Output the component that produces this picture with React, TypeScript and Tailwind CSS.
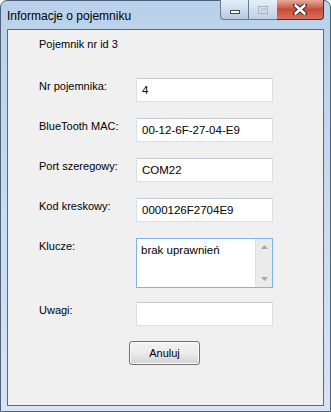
import type { ReactNode } from 'react';

const FONT = { fontFamily: '"Liberation Sans", Arial, sans-serif' };

function Row({ label, children }: { label: string; children: ReactNode }) {
  return (
    <div className="flex">
      <div className="w-[97px] pt-[2px] text-[11px] leading-[13px] text-black">{label}</div>
      {children}
    </div>
  );
}

function TextBox({ value }: { value: string }) {
  return (
    <div className="w-[137px] h-[24px] bg-white border border-[#d9dfe6] border-t-[#c5cbd3] pl-[5px] pt-[4px] text-[11.5px] leading-[14px] text-black">
      {value}
    </div>
  );
}

function MultiBox({ value }: { value: string }) {
  return (
    <div className="w-[137px] h-[50px] bg-white border border-[#7eb4ea] flex">
      <div className="flex-1 pl-[4px] pt-[4px] text-[11.5px] leading-[14px] text-black">{value}</div>
      <div className="w-[17px] bg-[#ebebeb] border-l border-[#e0e0e0] flex flex-col justify-between items-center py-[6px]">
        <svg width="7" height="4" viewBox="0 0 7 4">
          <path d="M0 4 L3.5 0 L7 4 Z" fill="#a8a8a8" />
        </svg>
        <svg width="7" height="4" viewBox="0 0 7 4">
          <path d="M0 0 L3.5 4 L7 0 Z" fill="#a8a8a8" />
        </svg>
      </div>
    </div>
  );
}

export default function App() {
  return (
    <div
      style={FONT}
      className="w-[331px] h-[412px] rounded-t-[7px] border border-[#4f6178] bg-gradient-to-b from-[#b9d1ea] via-[#c8dbf0] to-[#d6e4f5] flex flex-col"
    >
      {/* title bar */}
      <div className="h-[28px] flex items-start relative">
        <div className="pl-[6px] pt-[8px] text-[12px] leading-[14px] text-black">Informacje o pojemniku</div>
        <div className="absolute left-[219px] top-[-1px] flex h-[20px]">
          <div className="w-[29px] rounded-bl-[4px] border border-t-0 border-[#6a7b90] bg-gradient-to-b from-[#e6eef7] to-[#b7c9de] flex items-center justify-center">
            <div className="mt-[4px] w-[10px] h-[4px] bg-white border border-[#3c4a5c]" />
          </div>
          <div className="w-[28px] border-b border-[#6a7b90] bg-gradient-to-b from-[#e6eef7] to-[#bfd0e4] flex items-center justify-center">
            <div className="w-[10px] h-[8px] border border-[#a5b3c3] flex items-center justify-center">
              <div className="w-[5px] h-[3px] border border-[#b8c4d2]" />
            </div>
          </div>
          <div className="w-[47px] rounded-br-[4px] border border-t-0 border-l-0 border-[#5a2a22] bg-gradient-to-b from-[#e9a99b] via-[#c74b38] to-[#d9715f] flex items-center justify-center">
            <svg width="14" height="11" viewBox="0 0 14 11">
              <path
                d="M2 1 L12 10 M12 1 L2 10"
                stroke="#3a2a28"
                strokeWidth="4.5"
                strokeLinecap="round"
                fill="none"
              />
              <path d="M2.5 1.5 L11.5 9.5 M11.5 1.5 L2.5 9.5" stroke="#ffffff" strokeWidth="2.6" strokeLinecap="round" />
            </svg>
          </div>
        </div>
      </div>

      {/* client area */}
      <div className="mx-[6px] h-[377px] border border-[#5a6b80] bg-[#f0f0f0]">
        <div className="pl-[31px] pt-[8px] flex flex-col">
          <div className="text-[11px] leading-[13px] text-black">Pojemnik nr id 3</div>
          <div className="mt-[27px] flex flex-col gap-[16px]">
            <Row label="Nr pojemnika:">
              <TextBox value="4" />
            </Row>
            <Row label="BlueTooth MAC:">
              <TextBox value="00-12-6F-27-04-E9" />
            </Row>
            <Row label="Port szeregowy:">
              <TextBox value="COM22" />
            </Row>
            <Row label="Kod kreskowy:">
              <TextBox value="0000126F2704E9" />
            </Row>
            <Row label="Klucze:">
              <MultiBox value="brak uprawnień" />
            </Row>
            <div className="-mt-[2px]">
              <Row label="Uwagi:">
                <TextBox value="" />
              </Row>
            </div>
          </div>
          <div className="mt-[15px] ml-[90px] w-[71px] h-[24px] rounded-[3px] border border-[#707070] bg-gradient-to-b from-[#f2f2f2] via-[#ebebeb] to-[#d3d3d3] flex items-center justify-center text-[11px] text-black shadow-[inset_0_0_0_1px_#fcfcfc]">
            Anuluj
          </div>
        </div>
      </div>
    </div>
  );
}
